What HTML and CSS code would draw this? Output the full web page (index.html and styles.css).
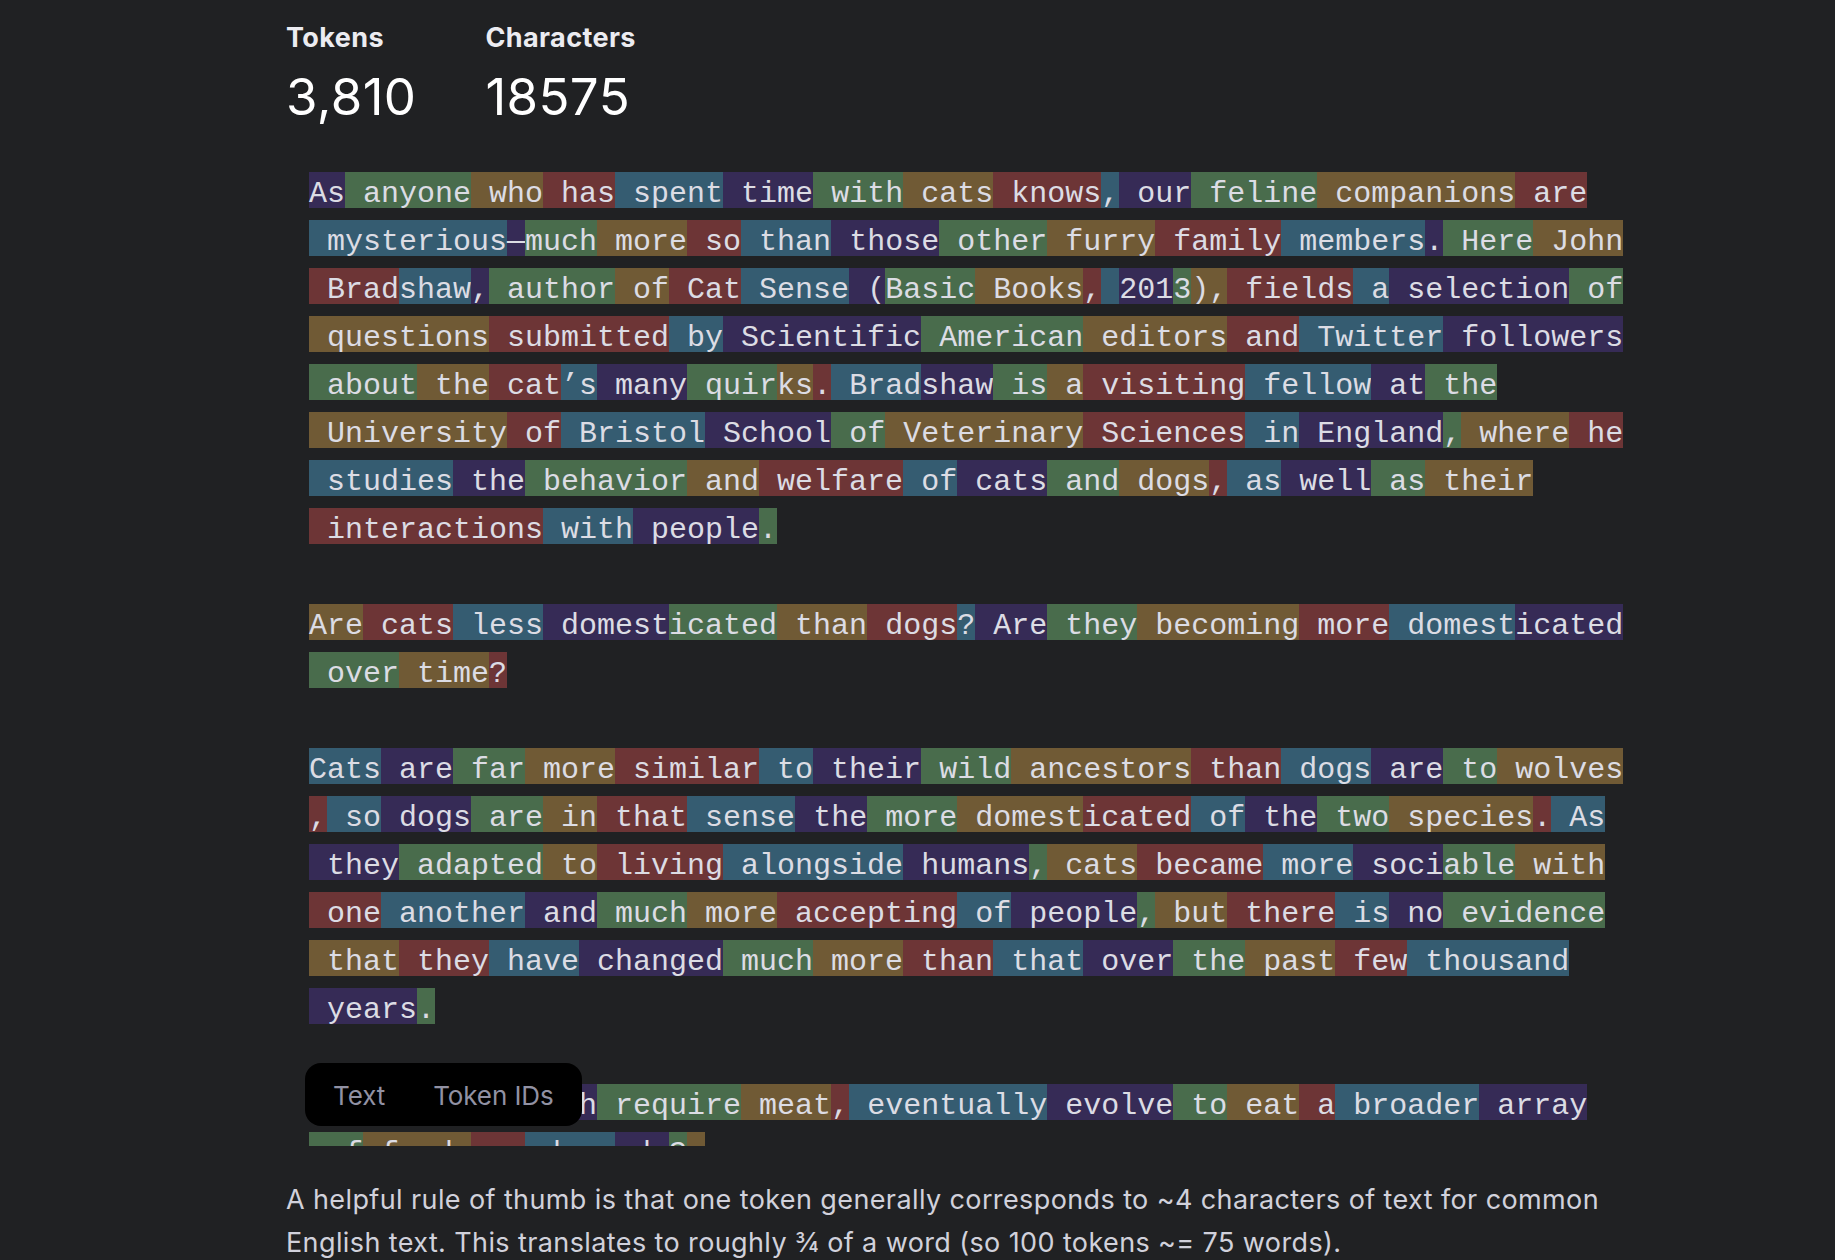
FILE: index.html
```html
<!DOCTYPE html>
<html lang="en">
<head>
<meta charset="utf-8">
<title>Tokenizer</title>
<link rel="stylesheet" href="styles.css">
</head>
<body>
<main class="page">
  <section class="stats">
    <div class="stat stat-tokens">
      <div class="stat-label">Tokens</div>
      <div class="stat-value">3,810</div>
    </div>
    <div class="stat">
      <div class="stat-label">Characters</div>
      <div class="stat-value">18575</div>
    </div>
  </section>

  <section class="token-area">
    <div class="tokens">
      <div class="para"><span class="t p">As</span><span class="t g"> anyone</span><span class="t o"> who</span><span class="t r"> has</span><span class="t b"> spent</span><span class="t p"> time</span><span class="t g"> with</span><span class="t o"> cats</span><span class="t r"> knows</span><span class="t b">,</span><span class="t p"> our</span><span class="t g"> feline</span><span class="t o"> companions</span><span class="t r"> are</span><span class="t b"> mysterious</span><span class="t p">—</span><span class="t g">much</span><span class="t o"> more</span><span class="t r"> so</span><span class="t b"> than</span><span class="t p"> those</span><span class="t g"> other</span><span class="t o"> furry</span><span class="t r"> family</span><span class="t b"> members</span><span class="t p">.</span><span class="t g"> Here</span><span class="t o"> John</span><span class="t r"> Brad</span><span class="t b">shaw</span><span class="t p">,</span><span class="t g"> author</span><span class="t o"> of</span><span class="t r"> Cat</span><span class="t b"> Sense</span><span class="t p"> (</span><span class="t g">Basic</span><span class="t o"> Books</span><span class="t r">,</span><span class="t b"> </span><span class="t p">201</span><span class="t g">3</span><span class="t o">),</span><span class="t r"> fields</span><span class="t b"> a</span><span class="t p"> selection</span><span class="t g"> of</span><span class="t o"> questions</span><span class="t r"> submitted</span><span class="t b"> by</span><span class="t p"> Scientific</span><span class="t g"> American</span><span class="t o"> editors</span><span class="t r"> and</span><span class="t b"> Twitter</span><span class="t p"> followers</span><span class="t g"> about</span><span class="t o"> the</span><span class="t r"> cat</span><span class="t b">’s</span><span class="t p"> many</span><span class="t g"> quir</span><span class="t o">ks</span><span class="t r">.</span><span class="t b"> Brad</span><span class="t p">shaw</span><span class="t g"> is</span><span class="t o"> a</span><span class="t r"> visiting</span><span class="t b"> fellow</span><span class="t p"> at</span><span class="t g"> the</span><span class="t o"> University</span><span class="t r"> of</span><span class="t b"> Bristol</span><span class="t p"> School</span><span class="t g"> of</span><span class="t o"> Veterinary</span><span class="t r"> Sciences</span><span class="t b"> in</span><span class="t p"> England</span><span class="t g">,</span><span class="t o"> where</span><span class="t r"> he</span><span class="t b"> studies</span><span class="t p"> the</span><span class="t g"> behavior</span><span class="t o"> and</span><span class="t r"> welfare</span><span class="t b"> of</span><span class="t p"> cats</span><span class="t g"> and</span><span class="t o"> dogs</span><span class="t r">,</span><span class="t b"> as</span><span class="t p"> well</span><span class="t g"> as</span><span class="t o"> their</span><span class="t r"> interactions</span><span class="t b"> with</span><span class="t p"> people</span><span class="t g">.</span></div>
      <div class="para"><span class="t o">Are</span><span class="t r"> cats</span><span class="t b"> less</span><span class="t p"> domest</span><span class="t g">icated</span><span class="t o"> than</span><span class="t r"> dogs</span><span class="t b">?</span><span class="t p"> Are</span><span class="t g"> they</span><span class="t o"> becoming</span><span class="t r"> more</span><span class="t b"> domest</span><span class="t p">icated</span><span class="t g"> over</span><span class="t o"> time</span><span class="t r">?</span></div>
      <div class="para"><span class="t b">Cats</span><span class="t p"> are</span><span class="t g"> far</span><span class="t o"> more</span><span class="t r"> similar</span><span class="t b"> to</span><span class="t p"> their</span><span class="t g"> wild</span><span class="t o"> ancestors</span><span class="t r"> than</span><span class="t b"> dogs</span><span class="t p"> are</span><span class="t g"> to</span><span class="t o"> wolves</span><span class="t r">,</span><span class="t b"> so</span><span class="t p"> dogs</span><span class="t g"> are</span><span class="t o"> in</span><span class="t r"> that</span><span class="t b"> sense</span><span class="t p"> the</span><span class="t g"> more</span><span class="t o"> domest</span><span class="t r">icated</span><span class="t b"> of</span><span class="t p"> the</span><span class="t g"> two</span><span class="t o"> species</span><span class="t r">.</span><span class="t b"> As</span><span class="t p"> they</span><span class="t g"> adapted</span><span class="t o"> to</span><span class="t r"> living</span><span class="t b"> alongside</span><span class="t p"> humans</span><span class="t g">,</span><span class="t o"> cats</span><span class="t r"> became</span><span class="t b"> more</span><span class="t p"> soci</span><span class="t g">able</span><span class="t o"> with</span><span class="t r"> one</span><span class="t b"> another</span><span class="t p"> and</span><span class="t g"> much</span><span class="t o"> more</span><span class="t r"> accepting</span><span class="t b"> of</span><span class="t p"> people</span><span class="t g">,</span><span class="t o"> but</span><span class="t r"> there</span><span class="t b"> is</span><span class="t p"> no</span><span class="t g"> evidence</span><span class="t o"> that</span><span class="t r"> they</span><span class="t b"> have</span><span class="t p"> changed</span><span class="t g"> much</span><span class="t o"> more</span><span class="t r"> than</span><span class="t b"> that</span><span class="t p"> over</span><span class="t g"> the</span><span class="t o"> past</span><span class="t r"> few</span><span class="t b"> thousand</span><span class="t p"> years</span><span class="t g">.</span></div>
      <div class="para"><span class="t o">Will</span><span class="t r"> cats</span><span class="t b">,</span><span class="t p"> which</span><span class="t g"> require</span><span class="t o"> meat</span><span class="t r">,</span><span class="t b"> eventually</span><span class="t p"> evolve</span><span class="t g"> to</span><span class="t o"> eat</span><span class="t r"> a</span><span class="t b"> broader</span><span class="t p"> array</span><span class="t g"> of</span><span class="t o"> foods</span><span class="t r"> as</span><span class="t b"> dogs</span><span class="t p"> do</span><span class="t g">?</span><span class="t o"> </span></div>
    </div>
    <div class="toggle">
      <span class="toggle-btn">Text</span>
      <span class="toggle-btn">Token IDs</span>
    </div>
  </section>

  <p class="note">A helpful rule of thumb is that one token generally corresponds to ~4 characters of text for common English text. This translates to roughly ¾ of a word (so 100 tokens ~= 75 words).</p>
</main>
</body>
</html>
```

FILE: styles.css
```css
html, body {
  margin: 0;
  padding: 0;
}

body {
  background: #202123;
  color: #ececf1;
  font-family: Inter, "Noto Sans", "Liberation Sans", sans-serif;
}

.page {
  width: 1366px;
  margin-left: 286px;
  padding-top: 22px;
}

/* ---------- stats ---------- */
.stats {
  display: flex;
  gap: 69px;
}

.stat-label {
  font-size: 27px;
  line-height: 32px;
  font-weight: 700;
  letter-spacing: 0.4px;
  color: #ececf1;
  margin-bottom: 13px;
}

.stat-value {
  font-size: 51px;
  line-height: 60px;
  font-weight: 400;
  letter-spacing: 0.4px;
  color: #ffffff;
}

/* ---------- token area ---------- */
.token-area {
  position: relative;
  margin-top: 45px;
}

.tokens {
  width: 1320px;
  height: 974px;
  padding-left: 23px;
  overflow: hidden;
  display: flex;
  flex-direction: column;
  gap: 60px;
  font-family: "Liberation Mono", "DejaVu Sans Mono", monospace;
  font-size: 30px;
  color: #dcdce4;
}

.para {
  display: flex;
  flex-wrap: wrap;
  row-gap: 12px;
}

.t {
  flex: none;
  white-space: pre;
  height: 36px;
  box-sizing: border-box;
  padding-top: 4px;
  line-height: 36px;
}

.t.p { background: #362b56; }
.t.g { background: #496c4c; }
.t.o { background: #705a35; }
.t.r { background: #6d3536; }
.t.b { background: #355c71; }

/* ---------- toggle ---------- */
.toggle {
  position: absolute;
  left: 19px;
  bottom: 20px;
  height: 63px;
  box-sizing: border-box;
  padding: 2px 28px 0;
  display: flex;
  align-items: center;
  gap: 48px;
  background: #000000;
  border-radius: 16px;
  font-size: 26px;
  letter-spacing: -0.1px;
  color: #9191a3;
}

/* ---------- note ---------- */
.note {
  margin: 32px 0 0;
  font-size: 27px;
  line-height: 43px;
  color: #d1d1db;
  letter-spacing: 0.39px;
}
```
